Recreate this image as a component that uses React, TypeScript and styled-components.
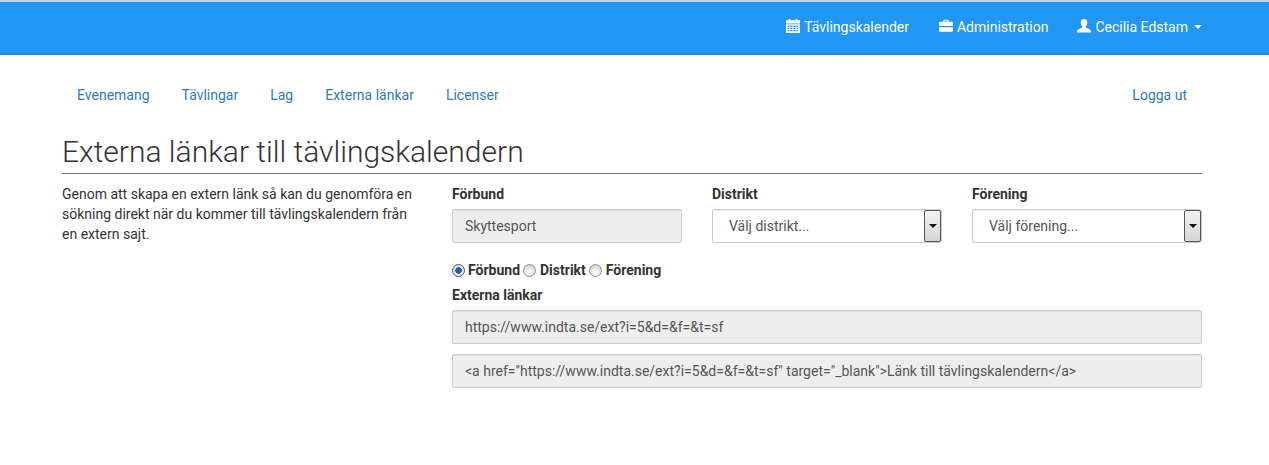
import React from "react";
import styled, { createGlobalStyle } from "styled-components";

const Global = createGlobalStyle`
  html, body { margin: 0; padding: 0; background: #fff; }
  body { font-family: Roboto, "Liberation Sans", sans-serif; font-size: 14px; line-height: 20px; color: #333; }
  * { box-sizing: border-box; }
`;

const Navbar = styled.header`
  height: 55px;
  background: #2196f3;
  border-top: 2px solid #c4d4e0;
  border-bottom: 2px solid #1e88e5;
  display: flex;
  justify-content: flex-end;
  align-items: center;
  padding: 0 67px 2px 0;
`;
const TopLink = styled.a<{ $ml: number }>`
  display: flex;
  align-items: center;
  color: #fff;
  font-size: 14px;
  margin-left: ${(p) => p.$ml}px;
`;
const TopIcon = styled.svg`
  width: 14px;
  height: 14px;
  margin-right: 4px;
  margin-top: -1px;
  fill: #fff;
  flex: none;
`;
const Caret = styled.span`
  width: 0;
  height: 0;
  margin-left: 6px;
  border-top: 4px solid #fff;
  border-left: 4px solid transparent;
  border-right: 4px solid transparent;
`;
const Container = styled.main`
  width: 1140px;
  margin: 0 0 0 62px;
`;
const Pills = styled.nav`
  display: flex;
  margin-top: 20px;
  height: 40px;
`;
const Pill = styled.a<{ $right?: boolean }>`
  color: #337ab7;
  padding: 10px 15px;
  margin-right: 2px;
  ${(p) => (p.$right ? "margin-left: auto; margin-right: 0;" : "")}
`;
const Title = styled.h1`
  margin: 17px 0 0;
  font-size: 30px;
  font-weight: 300;
  line-height: 39px;
  color: #333;
  padding-bottom: 2px;
  border-bottom: 1px solid #777;
`;
const Body = styled.section`
  display: flex;
  margin-top: 10px;
`;
const Intro = styled.p`
  width: 360px;
  margin: 0 30px 0 0;
  flex: none;
`;
const FormArea = styled.div`
  flex: 1;
`;
const Fields = styled.div`
  display: grid;
  grid-template-columns: repeat(3, 230px);
  column-gap: 30px;
`;
const Label = styled.label`
  display: block;
  font-weight: 700;
  margin-bottom: 5px;
`;
const fieldBase = `
  height: 34px;
  border: 1px solid #ccc;
  border-radius: 2px;
  display: flex;
  align-items: center;
  color: #555;
  box-shadow: inset 0 1px 1px rgba(0,0,0,.075);
`;
const ReadOnly = styled.div<{ $mb?: number }>`
  ${fieldBase}
  background: #eee;
  padding: 0 12px;
  margin-bottom: ${(p) => p.$mb ?? 0}px;
`;
const Select = styled.div`
  ${fieldBase}
  background: #fff;
  padding: 0 0 0 16px;
  justify-content: space-between;
`;
const SelectBtn = styled.span`
  width: 17px;
  height: 32px;
  border: 1px solid #555;
  border-radius: 2px;
  background: linear-gradient(#f4f4f4, #d4d4d4);
  display: flex;
  align-items: center;
  justify-content: center;
  &::after {
    content: "";
    border-top: 4px solid #111;
    border-left: 4px solid transparent;
    border-right: 4px solid transparent;
  }
`;
const Radios = styled.div`
  display: flex;
  align-items: center;
  margin-top: 17px;
  height: 20px;
  font-weight: 700;
`;
const Radio = styled.span<{ $on?: boolean }>`
  width: 13px;
  height: 13px;
  border-radius: 50%;
  flex: none;
  margin: 0 ${(p) => (p.$on ? 3 : 4)}px 0 ${(p) => (p.$on ? 0 : 3)}px;
  border: 1px solid ${(p) => (p.$on ? "#555" : "#8f8f8f")};
  background: ${(p) =>
    p.$on
      ? "radial-gradient(circle, #1f5fa8 0 3px, #e8e8e8 3.5px)"
      : "radial-gradient(circle at 50% 70%, #fff, #c8c8c8)"};
`;
const LinksLabel = styled(Label)`
  margin: 5px 0 5px;
`;

const CalendarIcon = () => (
  <TopIcon viewBox="0 0 16 16">
    <path fillRule="evenodd" d="M3 0h2v1.500h6V0h2v1.500h3V5H0V1.500h3zM0 6h16v10H0zm2 1.500V9h2V7.500zm3 0V9h2.500V7.500zm3.500 0V9H11V7.500zm3.500 0V9h2V7.500zM2 10v1.500h2V10zm3 0v1.500h2.500V10zm3.500 0v1.500H11V10zm3.500 0v1.500h2V10zM2 12.500V14h2v-1.500zm3 0V14h2.500v-1.500zm3.500 0V14H11v-1.500zm3.500 0V14h2v-1.500z" />
  </TopIcon>
);
const BriefcaseIcon = () => (
  <TopIcon viewBox="0 0 16 16">
    <path fillRule="evenodd" d="M5 3V1.500C5 1 5.400.8 6 .8h4c.6 0 1 .2 1 .7V3h3.500c.8 0 1.500.6 1.500 1.400V8H0V4.400C0 3.600.7 3 1.500 3zm1.300 0h3.400V2H6.300zM0 9.300h16v4c0 .8-.7 1.400-1.500 1.400h-13C.7 14.700 0 14.100 0 13.300z" />
  </TopIcon>
);
const UserIcon = () => (
  <TopIcon viewBox="0 0 16 16">
    <path d="M8 0c2.300 0 3.800 1.700 3.800 4.200 0 1.700-.7 3.300-1.700 4.200-.4.400-.4 1.200.2 1.600 1.600.9 5.700 1.700 5.700 4v1.500H0V14c0-2.300 4.100-3.100 5.700-4 .6-.4.600-1.200.2-1.600C4.900 7.500 4.200 5.900 4.200 4.200 4.200 1.700 5.700 0 8 0z" />
  </TopIcon>
);

export default function App() {
  return (
    <>
      <Global />
      <Navbar>
        <TopLink $ml={0}><CalendarIcon />Tävlingskalender</TopLink>
        <TopLink $ml={30}><BriefcaseIcon />Administration</TopLink>
        <TopLink $ml={29}><UserIcon />Cecilia Edstam<Caret /></TopLink>
      </Navbar>
      <Container>
        <Pills>
          <Pill>Evenemang</Pill>
          <Pill>Tävlingar</Pill>
          <Pill>Lag</Pill>
          <Pill>Externa länkar</Pill>
          <Pill>Licenser</Pill>
          <Pill $right>Logga ut</Pill>
        </Pills>
        <Title>Externa länkar till tävlingskalendern</Title>
        <Body>
          <Intro>Genom att skapa en extern länk så kan du genomföra en sökning direkt när du kommer till tävlingskalendern från en extern sajt.</Intro>
          <FormArea>
            <Fields>
              <div>
                <Label>Förbund</Label>
                <ReadOnly>Skyttesport</ReadOnly>
              </div>
              <div>
                <Label>Distrikt</Label>
                <Select>Välj distrikt...<SelectBtn /></Select>
              </div>
              <div>
                <Label>Förening</Label>
                <Select>Välj förening...<SelectBtn /></Select>
              </div>
            </Fields>
            <Radios>
              <Radio $on />Förbund<Radio />Distrikt<Radio />Förening
            </Radios>
            <LinksLabel>Externa länkar</LinksLabel>
            <ReadOnly $mb={10}>https://www.indta.se/ext?i=5&amp;d=&amp;f=&amp;t=sf</ReadOnly>
            <ReadOnly>{'<a href="https://www.indta.se/ext?i=5&d=&f=&t=sf" target="_blank">Länk till tävlingskalendern</a>'}</ReadOnly>
          </FormArea>
        </Body>
      </Container>
    </>
  );
}
